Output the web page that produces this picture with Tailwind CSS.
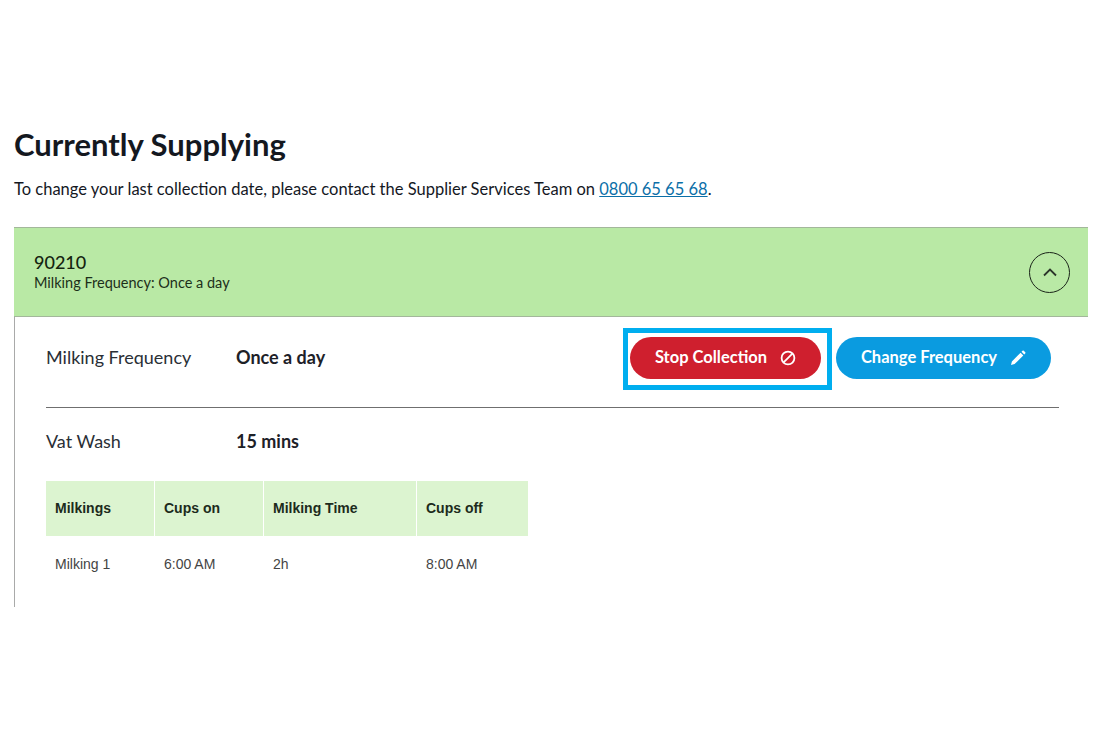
<!doctype html>
<html><head><meta charset="utf-8"><script src="https://cdn.jsdelivr.net/npm/@tailwindcss/browser@4"></script></head>
<body class="bg-white">
<div class="w-[1100px] h-[733px] overflow-hidden bg-white pt-[125px] pl-[14px] pr-[12px] font-['Lato','Noto_Sans',sans-serif] text-[#14181f]">
  <h1 class="text-[31px] leading-[38px] font-bold">Currently Supplying</h1>
  <p class="mt-[15px] text-[16.5px] leading-[22px]">To change your last collection date, please contact the Supplier Services Team on <a class="text-[#0b6fa8] underline">0800 65 65 68</a>.</p>
  <div class="mt-[27px] border-l border-[#a9aaa9] h-[380px]">
    <div class="h-[90px] bg-[#b9e9a5] border-y border-[#a3b79b] -ml-px flex items-center justify-between pl-[20px] pr-[18px]">
      <div>
        <div class="text-[18px] leading-[22px] font-medium text-[#14230f]">90210</div>
        <div class="text-[14.5px] leading-[20px] text-[#1c2f1a]">Milking Frequency: Once a day</div>
      </div>
      <div class="w-[41px] h-[41px] rounded-full border border-[#1a2419] flex items-center justify-center">
        <svg width="16" height="10" viewBox="0 0 16 10" fill="none" stroke="#2b352a" stroke-width="1.8"><path d="M2 8.5 8 2.5l6 6"/></svg>
      </div>
    </div>
    <div class="pl-[31px] pr-[29px]">
      <div class="h-[91px] border-b border-[#6f6f6f] flex items-center pb-[9px]">
        <div class="w-[190px] text-[18px] text-[#2a2f36]">Milking Frequency</div>
        <div class="text-[18px] font-bold text-[#1d2128]">Once a day</div>
        <div class="ml-auto mr-[8px] flex items-center gap-[15px]">
          <div class="relative">
            <div class="absolute -left-[7px] -top-[9px] w-[209px] h-[62px] border-[5px] border-[#00aeef]"></div>
            <button class="relative w-[191px] h-[42px] rounded-full bg-[#cf1f2e] text-white text-[16.5px] font-bold flex items-center justify-center gap-[13px]">Stop Collection
              <svg width="16" height="16" viewBox="0 0 16 16" fill="none" stroke="#fff" stroke-width="1.8"><circle cx="8" cy="8" r="6.4"/><path d="M3.6 12.4 12.4 3.6"/></svg>
            </button>
          </div>
          <button class="w-[215px] h-[42px] rounded-full bg-[#0a9be0] text-white text-[16.5px] font-bold flex items-center justify-center gap-[13px]">Change Frequency
            <svg width="16" height="16" viewBox="0 0 16 16" fill="#fff"><path d="M1 15l.9-3.6L10.6 2.7l2.7 2.7-8.7 8.7zM11.5 1.8l1-1a.9.9 0 0 1 1.3 0l1.4 1.4a.9.9 0 0 1 0 1.3l-1 1z"/></svg>
          </button>
        </div>
      </div>
      <div class="h-[73px] flex items-center pb-[6px]">
        <div class="w-[190px] text-[18px] text-[#2a2f36]">Vat Wash</div>
        <div class="text-[18px] font-bold text-[#1d2128]">15 mins</div>
      </div>
      <div class="w-[482px] grid grid-cols-[109px_109px_153px_111px] font-['Liberation_Sans',sans-serif] text-[14px]">
        <div class="h-[55px] bg-[#dcf4d0] border-r border-white pl-[9px] flex items-center font-bold text-[#1c2b1c]">Milkings</div>
        <div class="h-[55px] bg-[#dcf4d0] border-r border-white pl-[9px] flex items-center font-bold text-[#1c2b1c]">Cups on</div>
        <div class="h-[55px] bg-[#dcf4d0] border-r border-white pl-[9px] flex items-center font-bold text-[#1c2b1c]">Milking Time</div>
        <div class="h-[55px] bg-[#dcf4d0] pl-[9px] flex items-center font-bold text-[#1c2b1c]">Cups off</div>
        <div class="h-[57px] pl-[9px] flex items-center text-[#444]">Milking 1</div>
        <div class="h-[57px] pl-[9px] flex items-center text-[#444]">6:00 AM</div>
        <div class="h-[57px] pl-[9px] flex items-center text-[#444]">2h</div>
        <div class="h-[57px] pl-[9px] flex items-center text-[#444]">8:00 AM</div>
      </div>
    </div>
  </div>
</div>
</body></html>
